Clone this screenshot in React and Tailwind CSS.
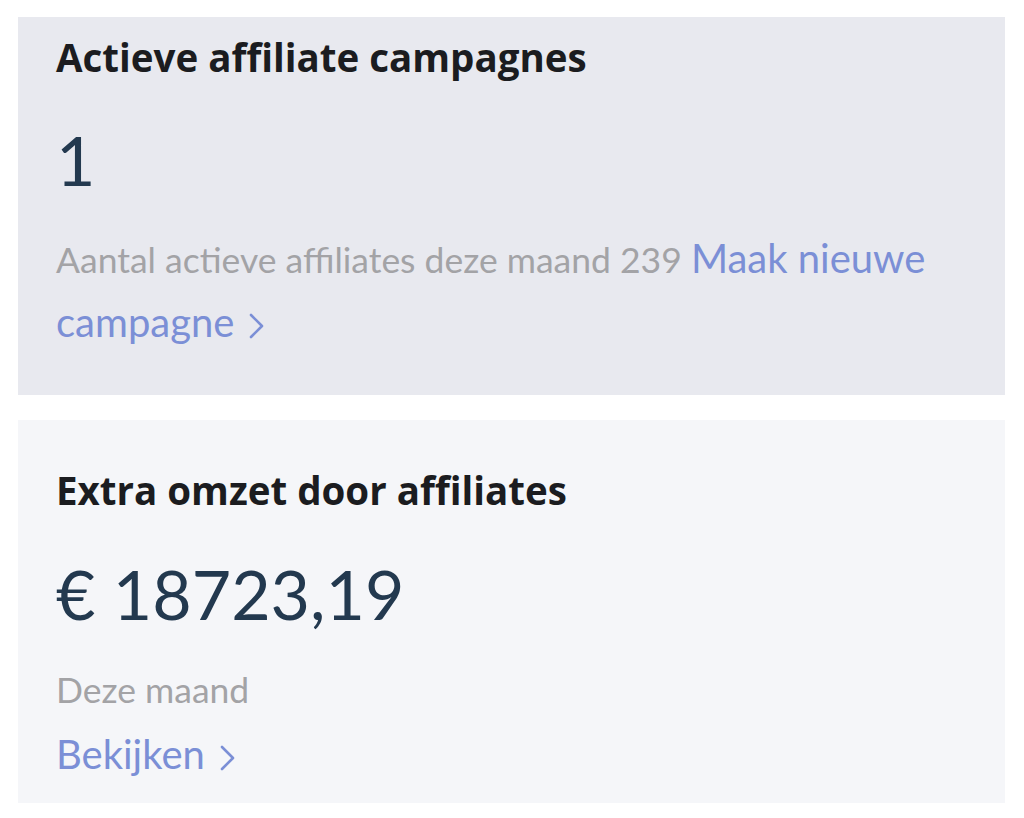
export default function App() {
  const Chevron = () => (
    <svg className="inline-block ml-[14px] align-[-3px]" width="16" height="28" viewBox="0 0 16 28" fill="none">
      <path d="M3 3 L14 14 L3 25" stroke="#7b8fd6" strokeWidth="2.6" strokeLinecap="round" strokeLinejoin="round" />
    </svg>
  );
  return (
    <div
      className="w-[1024px] h-[818px] bg-white pt-[17px] pl-[18px] pr-[19px] flex flex-col gap-[25px]"
      style={{ fontFamily: '"Lato", "Open Sans", sans-serif' }}
    >
      <div className="h-[378px] bg-[#e8e9ef] pl-[38px] pr-[38px] pt-[16px]">
        <h2
          className="text-[38.5px] leading-[48px] font-bold text-[#1b1c20]"
          style={{ fontFamily: '"Open Sans", sans-serif' }}
        >
          Actieve affiliate campagnes
        </h2>
        <div className="mt-[45px] text-[68px] leading-[68px] text-[#23394f]">1</div>
        <p className="mt-[33px] text-[35.5px] leading-[62px] text-[#a3a3a6]">
          <span>Aantal actieve affiliates deze maand 239</span>{' '}
          <a className="text-[40px] text-[#7b8fd6]">Maak nieuwe</a>{' '}
          <a className="text-[40px] text-[#7b8fd6]">campagne<Chevron /></a>
        </p>
      </div>
      <div className="h-[383px] bg-[#f5f6f9] pl-[38px] pr-[38px] pt-[46px]">
        <h2
          className="text-[38.5px] leading-[48px] font-bold text-[#1b1c20]"
          style={{ fontFamily: '"Open Sans", sans-serif' }}
        >
          Extra omzet door affiliates
        </h2>
        <div className="mt-[46px] text-[68px] leading-[68px] text-[#23394f]">€ 18723,19</div>
        <p className="mt-[42px] text-[35.5px] leading-[40px] text-[#a3a3a6]">Deze maand</p>
        <p className="mt-[24px] text-[40px] leading-[40px] text-[#7b8fd6]">Bekijken<Chevron /></p>
      </div>
    </div>
  );
}
